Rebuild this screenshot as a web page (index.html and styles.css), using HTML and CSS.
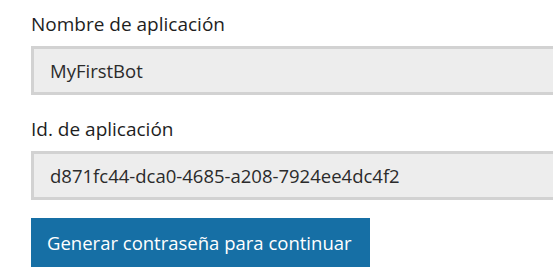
FILE: index.html
```html
<!DOCTYPE html>
<html lang="es">
<head>
<meta charset="utf-8">
<link rel="stylesheet" href="styles.css">
</head>
<body>
<form class="form">
  <div class="field">
    <label class="label" for="appname">Nombre de aplicación</label>
    <input class="input" id="appname" type="text" value="MyFirstBot" readonly>
  </div>
  <div class="field">
    <label class="label" for="appid">Id. de aplicación</label>
    <input class="input" id="appid" type="text" value="d871fc44-dca0-4685-a208-7924ee4dc4f2" readonly>
  </div>
  <button class="button" type="button">Generar contraseña para continuar</button>
</form>
</body>
</html>
```

FILE: styles.css
```css
html, body {
  margin: 0;
  padding: 0;
  background: #ffffff;
  overflow: hidden;
}
body {
  font-family: "Open Sans", "Noto Sans", sans-serif;
  font-size: 18.5px;
  color: #1e1e1e;
}
.form {
  display: flex;
  flex-direction: column;
  align-items: stretch;
  padding-left: 31px;
}
.field {
  display: flex;
  flex-direction: column;
  margin-bottom: 10px;
}
.label {
  display: block;
  padding-top: 11px;
  height: 27px;
  line-height: 27px;
  margin-bottom: 8px;
  font-size: 19px;
}
.input {
  box-sizing: border-box;
  width: 100%;
  height: 49px;
  margin: 0;
  padding: 0 16px;
  border: 3px solid #d2d2d2;
  border-right: none;
  background: #ededed;
  font-family: inherit;
  font-size: 18.5px;
  color: #2b2b2b;
  outline: none;
}
.button {
  align-self: flex-start;
  box-sizing: border-box;
  height: 49px;
  margin-top: 8px;
  padding: 0 18px 0 16px;
  border: none;
  background: #166fa5;
  color: #ffffff;
  font-family: inherit;
  font-size: 18.5px;
  cursor: pointer;
}
```
